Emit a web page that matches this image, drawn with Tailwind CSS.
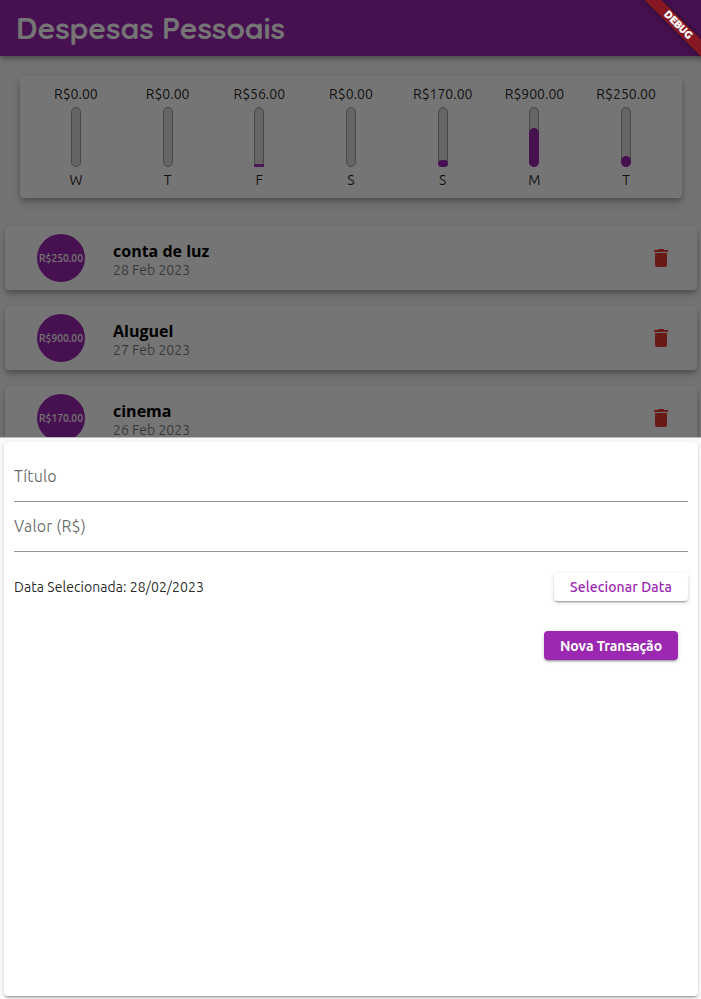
<!DOCTYPE html>
<html lang="pt-BR">
<head>
<meta charset="utf-8">
<title>Despesas Pessoais</title>
<script src="https://cdn.jsdelivr.net/npm/@tailwindcss/browser@4"></script>
</head>
<body class="relative h-[999px] w-[701px] overflow-hidden bg-[#fafafa] font-[Ubuntu,'Noto_Sans',sans-serif] text-sm text-black/87">
<header class="relative flex h-14 items-center bg-[#9c27b0] px-4 shadow-[0_2px_4px_-1px_#0003,0_4px_5px_#00000024,0_1px_10px_#0000001f]">
  <h1 class="font-[Quicksand,Lato,sans-serif] text-[30px] leading-9 font-bold tracking-[-0.08px] whitespace-nowrap text-white">Despesas Pessoais</h1>
</header>

<section class="mx-5 mt-5 mr-[19px] grid h-[122px] grid-cols-7 rounded bg-white px-2.5 pt-[9px] text-center shadow-[0_3px_5px_-1px_#0003,0_6px_8px_#00000024,0_1px_8px_#00000010]">
  <div class="flex flex-col items-center"><span class="h-[22px] leading-[18px]">R$0.00</span><i class="flex h-[60px] w-[10px] items-end rounded-[5px] border border-[#9e9e9e] bg-[#dcdcdc]"></i><span class="mt-1 leading-[18px]">W</span></div>
  <div class="flex flex-col items-center"><span class="h-[22px] leading-[18px]">R$0.00</span><i class="flex h-[60px] w-[10px] items-end rounded-[5px] border border-[#9e9e9e] bg-[#dcdcdc]"></i><span class="mt-1 leading-[18px]">T</span></div>
  <div class="flex flex-col items-center"><span class="h-[22px] leading-[18px]">R$56.00</span><i class="flex h-[60px] w-[10px] items-end rounded-[5px] border border-[#9e9e9e] bg-[#dcdcdc]"><b class="-mx-px -mb-px h-[3px] w-[10px] shrink-0 bg-[#9c27b0]/90"></b></i><span class="mt-1 leading-[18px]">F</span></div>
  <div class="flex flex-col items-center"><span class="h-[22px] leading-[18px]">R$0.00</span><i class="flex h-[60px] w-[10px] items-end rounded-[5px] border border-[#9e9e9e] bg-[#dcdcdc]"></i><span class="mt-1 leading-[18px]">S</span></div>
  <div class="flex flex-col items-center"><span class="h-[22px] leading-[18px]">R$170.00</span><i class="flex h-[60px] w-[10px] items-end rounded-[5px] border border-[#9e9e9e] bg-[#dcdcdc]"><b class="-mx-px -mb-px h-[7.4px] w-[10px] shrink-0 rounded-[5px] bg-[#9c27b0]"></b></i><span class="mt-1 leading-[18px]">S</span></div>
  <div class="flex flex-col items-center"><span class="h-[22px] leading-[18px]">R$900.00</span><i class="flex h-[60px] w-[10px] items-end rounded-[5px] border border-[#9e9e9e] bg-[#dcdcdc]"><b class="-mx-px -mb-px h-[39.2px] w-[10px] shrink-0 rounded-[5px] bg-[#9c27b0]"></b></i><span class="mt-1 leading-[18px]">M</span></div>
  <div class="flex flex-col items-center"><span class="h-[22px] leading-[18px]">R$250.00</span><i class="flex h-[60px] w-[10px] items-end rounded-[5px] border border-[#9e9e9e] bg-[#dcdcdc]"><b class="-mx-px -mb-px h-[10.9px] w-[10px] shrink-0 rounded-[5px] bg-[#9c27b0]"></b></i><span class="mt-1 leading-[18px]">T</span></div>
</section>

<main class="mt-7 mr-1 ml-[5px] flex flex-col gap-4">
  <article class="flex h-16 items-center rounded bg-white pr-6 pl-8 shadow-[0_3px_5px_-1px_#0003,0_5px_7px_#00000024,0_1px_6px_#00000010]">
    <div class="flex size-12 items-center justify-center rounded-full bg-[#9c27b0] text-[10.3px] font-medium text-white">R$250.00</div>
    <div class="ml-7 flex-1"><h2 class="pt-1 font-['Open_Sans',sans-serif] text-base leading-5 font-bold text-black">conta de luz</h2><p class="leading-[18px] text-black/54">28 Feb 2023</p></div>
    <svg class="size-6" viewBox="0 0 24 24" fill="#e53935"><path d="M6 19c0 1.100.9 2 2 2h8c1.100 0 2-.9 2-2V7H6v12zM19 4h-3.500l-1-1h-5l-1 1H5v2h14V4z"/></svg>
  </article>
  <article class="flex h-16 items-center rounded bg-white pr-6 pl-8 shadow-[0_3px_5px_-1px_#0003,0_5px_7px_#00000024,0_1px_6px_#00000010]">
    <div class="flex size-12 items-center justify-center rounded-full bg-[#9c27b0] text-[10.3px] font-medium text-white">R$900.00</div>
    <div class="ml-7 flex-1"><h2 class="pt-1 font-['Open_Sans',sans-serif] text-base leading-5 font-bold text-black">Aluguel</h2><p class="leading-[18px] text-black/54">27 Feb 2023</p></div>
    <svg class="size-6" viewBox="0 0 24 24" fill="#e53935"><path d="M6 19c0 1.100.9 2 2 2h8c1.100 0 2-.9 2-2V7H6v12zM19 4h-3.500l-1-1h-5l-1 1H5v2h14V4z"/></svg>
  </article>
  <article class="flex h-16 items-center rounded bg-white pr-6 pl-8 shadow-[0_3px_5px_-1px_#0003,0_5px_7px_#00000024,0_1px_6px_#00000010]">
    <div class="flex size-12 items-center justify-center rounded-full bg-[#9c27b0] text-[10.3px] font-medium text-white">R$170.00</div>
    <div class="ml-7 flex-1"><h2 class="pt-1 font-['Open_Sans',sans-serif] text-base leading-5 font-bold text-black">cinema</h2><p class="leading-[18px] text-black/54">26 Feb 2023</p></div>
    <svg class="size-6" viewBox="0 0 24 24" fill="#e53935"><path d="M6 19c0 1.100.9 2 2 2h8c1.100 0 2-.9 2-2V7H6v12zM19 4h-3.500l-1-1h-5l-1 1H5v2h14V4z"/></svg>
  </article>
</main>

<!-- Modal sheet over a dimmed page -->
<div class="absolute inset-0 flex flex-col justify-end bg-black/54">
  <div class="flex h-[562px] flex-col border-t border-[#bbb] bg-[#fafafa] pt-1 pr-[3px] pb-[3px] pl-1">
    <form class="flex flex-1 flex-col rounded bg-white px-2.5 pt-[9px] pb-2.5 shadow-[0_3px_1px_-2px_#0003,0_2px_2px_#00000024,0_1px_5px_#0000001f]">
      <label class="flex h-[51px] items-center border-b border-[#949494] text-base tracking-[0.1px] text-black/60"><span>Título</span></label>
      <label class="flex h-[50px] items-center border-b border-[#949494] pb-px text-base tracking-[0.15px] text-black/60"><span>Valor (R$)</span></label>
      <div class="flex h-[70px] items-center justify-between">
        <span class="tracking-[0.06px]">Data Selecionada: 28/02/2023</span>
        <button type="button" class="h-7 w-[134px] rounded bg-white font-medium tracking-[0.1px] whitespace-nowrap text-[#9c27b0] shadow-[0_3px_1px_-2px_#0003,0_2px_2px_#00000024,0_1px_5px_#0000001f]">Selecionar Data</button>
      </div>
      <div class="flex justify-end pt-[9px] pr-2.5">
        <button type="button" class="h-[29px] w-[134px] rounded bg-[#9c27b0] pt-[0.5px] font-bold tracking-[-0.06px] whitespace-nowrap text-white shadow-[0_3px_1px_-2px_#0003,0_2px_2px_#00000024,0_1px_5px_#0000001f]">Nova Transação</button>
      </div>
    </form>
  </div>
</div>

<div class="absolute top-0 right-0 size-16 overflow-hidden">
  <div class="absolute top-[18px] left-[-24px] h-3 w-32 rotate-45 bg-[#861823] pl-[3px] text-center text-[10.2px] leading-[10.5px] font-black text-white shadow-[0_0_6px_#0000007f] [-webkit-text-stroke:0.4px_white]">DEBUG</div>
</div>
</body>
</html>
